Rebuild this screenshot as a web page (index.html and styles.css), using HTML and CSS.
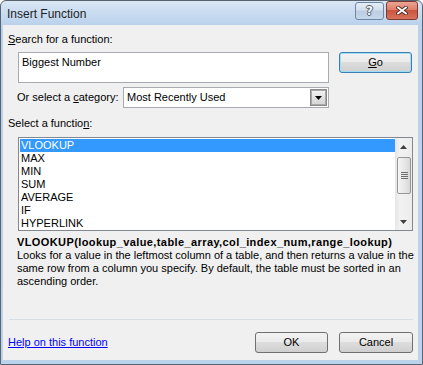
FILE: index.html
```html
<!DOCTYPE html>
<html>
<head>
    <meta charset="UTF-8">
    <title>Insert Function</title>
    <link rel="stylesheet" href="styles.css">
</head>
<body>
    <div class="window">
        <!-- caption bar -->
        <div class="titlebar">
            <span class="title">Insert Function</span>
            <div class="caption-buttons">
                <div class="cap-btn cap-help"><span>?</span></div>
                <div class="cap-btn cap-close">
                    <svg width="12" height="9" viewBox="0 0 12 9">
                        <path d="M2 1.5 L10 7.5 M10 1.5 L2 7.5" stroke="#4a2a25" stroke-width="3.6" stroke-linecap="square"/>
                        <path d="M2 1.5 L10 7.5 M10 1.5 L2 7.5" stroke="#ffffff" stroke-width="1.8" stroke-linecap="square"/>
                    </svg>
                </div>
            </div>
        </div>

        <div class="client">
            <div class="label"><u>S</u>earch for a function:</div>
            <div class="search-row">
                <div class="search-box">Biggest Number</div>
                <button type="button" class="btn btn-default btn-go"><u>G</u>o</button>
            </div>

            <div class="category-row">
                <span class="category-label">Or select a <u>c</u>ategory:</span>
                <div class="select">
                    <span class="select-value">Most Recently Used</span>
                    <span class="select-drop">
                        <svg width="7" height="4" viewBox="0 0 7 4"><path d="M0 0 H7 L3.5 4 Z" fill="#000"/></svg>
                    </span>
                </div>
            </div>

            <div class="label label-list">Select a functio<u>n</u>:</div>
            <div class="listbox">
                <ul class="items">
                    <li class="selected">VLOOKUP</li>
                    <li>MAX</li>
                    <li>MIN</li>
                    <li>SUM</li>
                    <li>AVERAGE</li>
                    <li>IF</li>
                    <li>HYPERLINK</li>
                </ul>
                <div class="scrollbar">
                    <div class="sb-arrow">
                        <svg width="7" height="4" viewBox="0 0 7 4"><path d="M0 4 H7 L3.5 0 Z" fill="#3e3e3e"/></svg>
                    </div>
                    <div class="sb-track">
                        <div class="sb-thumb">
                            <div class="grip"></div>
                        </div>
                    </div>
                    <div class="sb-arrow">
                        <svg width="7" height="4" viewBox="0 0 7 4"><path d="M0 0 H7 L3.5 4 Z" fill="#3e3e3e"/></svg>
                    </div>
                </div>
            </div>

            <div class="signature">VLOOKUP(lookup_value,table_array,col_index_num,range_lookup)</div>
            <p class="desc">Looks for a value in the leftmost column of a table, and then returns a value in the same row from a column you specify. By default, the table must be sorted in an ascending order.</p>

            <div class="footer">
                <div class="separator"></div>
                <div class="footer-row">
                    <a href="#" class="help-link">Help on this function</a>
                    <div class="buttons">
                        <button type="button" class="btn btn-ok">OK</button>
                        <button type="button" class="btn btn-cancel">Cancel</button>
                    </div>
                </div>
            </div>
        </div>
    </div>
</body>
</html>
```

FILE: styles.css
```css
* {
    box-sizing: border-box;
}
body {
    margin: 0;
    background: #ffffff;
    font-family: "Liberation Sans", Arial, sans-serif;
    font-size: 11px;
    line-height: 13px;
    color: #000000;
}
.window {
    width: 423px;
    height: 365px;
    display: flex;
    flex-direction: column;
    border: 1px solid #5a6470;
    border-radius: 6px 6px 0 0;
    padding: 0 4px 4px 2px;
    background: linear-gradient(#d9e6f4, #bad2ec 24px, #bcd3ec);
}

/* caption bar */
.titlebar {
    height: 24px;
    display: flex;
    align-items: flex-start;
}
.title {
    font-size: 12px;
    line-height: 15px;
    color: #1e1e1e;
    padding: 6px 0 0 4px;
}
.caption-buttons {
    margin-left: auto;
    display: flex;
    gap: 2px;
}
.cap-btn {
    display: flex;
    justify-content: center;
    align-items: center;
}
.cap-help {
    width: 29px;
    height: 18px;
    margin-top: 1px;
    border: 1px solid #6d86a4;
    border-radius: 3px;
    background: linear-gradient(#e6eef7, #d2dfee 45%, #bccde2 50%, #c7d8ec);
}
.cap-help span {
    font-family: "DejaVu Sans", sans-serif;
    font-weight: bold;
    font-size: 12px;
    color: #f4f6f9;
    text-shadow: 1px 0 #4f5f72, -1px 0 #4f5f72, 0 1px #4f5f72, 0 -1px #4f5f72;
}
.cap-close {
    width: 32px;
    height: 19px;
    border: 1px solid #7a3a32;
    border-radius: 3px;
    background: linear-gradient(#eca495, #de7f6a 45%, #cb5540 50%, #d8725b);
}

/* client area */
.client {
    flex: 1;
    display: flex;
    flex-direction: column;
    background: #f0f0f0;
    padding: 8px 0 0 5px;
}
.label {
    height: 13px;
}
.search-row {
    display: flex;
    align-items: flex-start;
    margin: 6px 0 0 10px;
}
.search-box {
    width: 311px;
    height: 31px;
    background: #ffffff;
    border: 1px solid #a7abb0;
    padding: 3px 0 0 3px;
}
.btn {
    font: inherit;
    height: 21px;
    border: 1px solid #707070;
    border-radius: 3px;
    color: #000000;
    padding: 0;
    background: linear-gradient(#f2f2f2, #ebebeb 45%, #dddddd 50%, #cfcfcf);
}
.btn-default {
    border-color: #3c7fb1;
    box-shadow: inset 0 0 0 1px #9fdcf6;
}
.btn-go {
    width: 73px;
    margin-left: 10px;
}
.category-row {
    display: flex;
    align-items: center;
    margin: 4px 0 0 9px;
}
.category-label {
    width: 106px;
}
.select {
    width: 206px;
    height: 21px;
    display: flex;
    align-items: center;
    background: #ffffff;
    border: 1px solid #a7abb0;
    padding: 1px;
}
.select-value {
    flex: 1;
    padding-left: 2px;
}
.select-drop {
    width: 17px;
    height: 100%;
    display: flex;
    justify-content: center;
    align-items: center;
    border: 1px solid #8a8a8a;
    box-shadow: inset 0 0 0 1px #a9a9a9;
    background: linear-gradient(#f3f3f3, #e2e2e2 50%, #d5d5d5);
}
.label-list {
    margin-top: 9px;
}

/* function list */
.listbox {
    margin: 7px 0 0 10px;
    width: 395px;
    height: 94px;
    display: flex;
    border: 1px solid #828790;
    background: #ffffff;
}
.items {
    flex: 1;
    list-style: none;
    margin: 1px 0 0 1px;
    padding: 0;
}
.items li {
    height: 13px;
    padding-left: 1px;
}
.items li.selected {
    background: #3399ff;
    color: #ffffff;
}
.scrollbar {
    width: 17px;
    display: flex;
    flex-direction: column;
    background: linear-gradient(to right, #e6e6e6, #f2f2f2 30%, #ececec);
}
.sb-arrow {
    height: 17px;
    display: flex;
    justify-content: center;
    align-items: center;
}
.sb-track {
    flex: 1;
    padding: 2px 0 0 2px;
}
.sb-thumb {
    width: 14px;
    height: 37px;
    display: flex;
    justify-content: center;
    align-items: center;
    border: 1px solid #969696;
    border-radius: 2px;
    background: linear-gradient(to right, #f4f4f4, #e9e9e9 50%, #d8d8d8);
}
.grip {
    width: 7px;
    height: 7px;
    background: repeating-linear-gradient(#6f6f6f 0 1px, transparent 1px 2px);
}

/* description */
.signature {
    font-weight: bold;
    letter-spacing: 0.4px;
    margin: 5px 0 0 9px;
}
.desc {
    margin: 0 0 0 9px;
    width: 404px;
}

/* bottom part */
.footer {
    margin-top: auto;
}
.separator {
    margin-left: 1px;
    width: 404px;
    height: 1px;
    background: #d5dfe5;
}
.footer-row {
    display: flex;
    align-items: flex-start;
    margin-top: 12px;
    height: 28px;
    padding-right: 5px;
}
.help-link {
    color: #0000ff;
    margin-top: 4px;
}
.buttons {
    margin-left: auto;
    display: flex;
    gap: 11px;
}
.btn-ok {
    width: 73px;
}
.btn-cancel {
    width: 74px;
}
```
